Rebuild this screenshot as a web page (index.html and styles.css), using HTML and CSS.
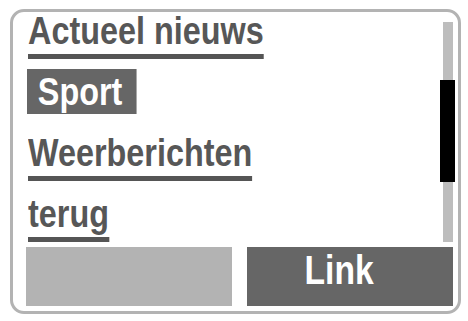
FILE: index.html
```html
<!DOCTYPE html>
<html lang="nl">
<head>
<meta charset="utf-8">
<title>Menu</title>
<link rel="stylesheet" href="styles.css">
</head>
<body>
<div class="frame">
  <div class="main">
    <ul class="list">
      <li class="item"><span class="label link">Actueel nieuws</span></li>
      <li class="item"><span class="label selected">Sport</span></li>
      <li class="item"><span class="label link">Weerberichten</span></li>
      <li class="item"><span class="label link">terug</span></li>
    </ul>
    <div class="scroll">
      <div class="track"><div class="thumb"></div></div>
    </div>
  </div>
  <div class="softkeys">
    <div class="key key-left"></div>
    <div class="key key-right"><span class="key-label">Link</span></div>
  </div>
</div>
</body>
</html>
```
FILE: styles.css
```css
html, body {
  margin: 0;
  padding: 0;
  background: #ffffff;
}

body {
  font-family: "Liberation Sans", Arial, sans-serif;
  font-weight: bold;
  color: #575757;
}

.frame {
  box-sizing: border-box;
  width: 451px;
  height: 305px;
  margin: 9px 0 0 10px;
  border: 3px solid #b3b3b3;
  border-radius: 14px;
  padding: 0 3px 5px 13px;
  display: flex;
  flex-direction: column;
}

.main {
  flex: 1;
  display: flex;
  min-height: 0;
}

.list {
  flex: 1;
  list-style: none;
  margin: -1px 0 0 0;
  padding: 0 0 0 2px;
}

.item {
  height: 61px;
  font-size: 39px;
  line-height: 40px;
  white-space: nowrap;
}

.label {
  display: inline-block;
  transform: scaleX(0.83);
  transform-origin: left center;
}

.link {
  border-bottom: 5px solid #555555;
  padding-bottom: 3px;
  margin-bottom: -8px;
}

.selected {
  background: #666666;
  color: #ffffff;
  padding: 3px 17px 2px 13px;
  margin: -3px 0 -2px -1px;
}

.scroll {
  width: 15px;
  padding: 10px 0 5px 0;
  display: flex;
}

.track {
  width: 10px;
  margin-left: 3px;
  background: #bdbdbd;
}

.thumb {
  width: 15px;
  height: 102px;
  margin: 58px 0 0 -3px;
  background: #000000;
}

.softkeys {
  height: 59px;
  display: grid;
  grid-template-columns: 206px 206px;
  column-gap: 15px;
}

.key-left {
  background: #b3b3b3;
}

.key-right {
  background: #666666;
  color: #ffffff;
  font-size: 41px;
  line-height: 47px;
  text-align: center;
  padding-right: 21px;
}

.key-label {
  display: inline-block;
  transform: scaleX(0.82);
  transform-origin: center center;
}
```
